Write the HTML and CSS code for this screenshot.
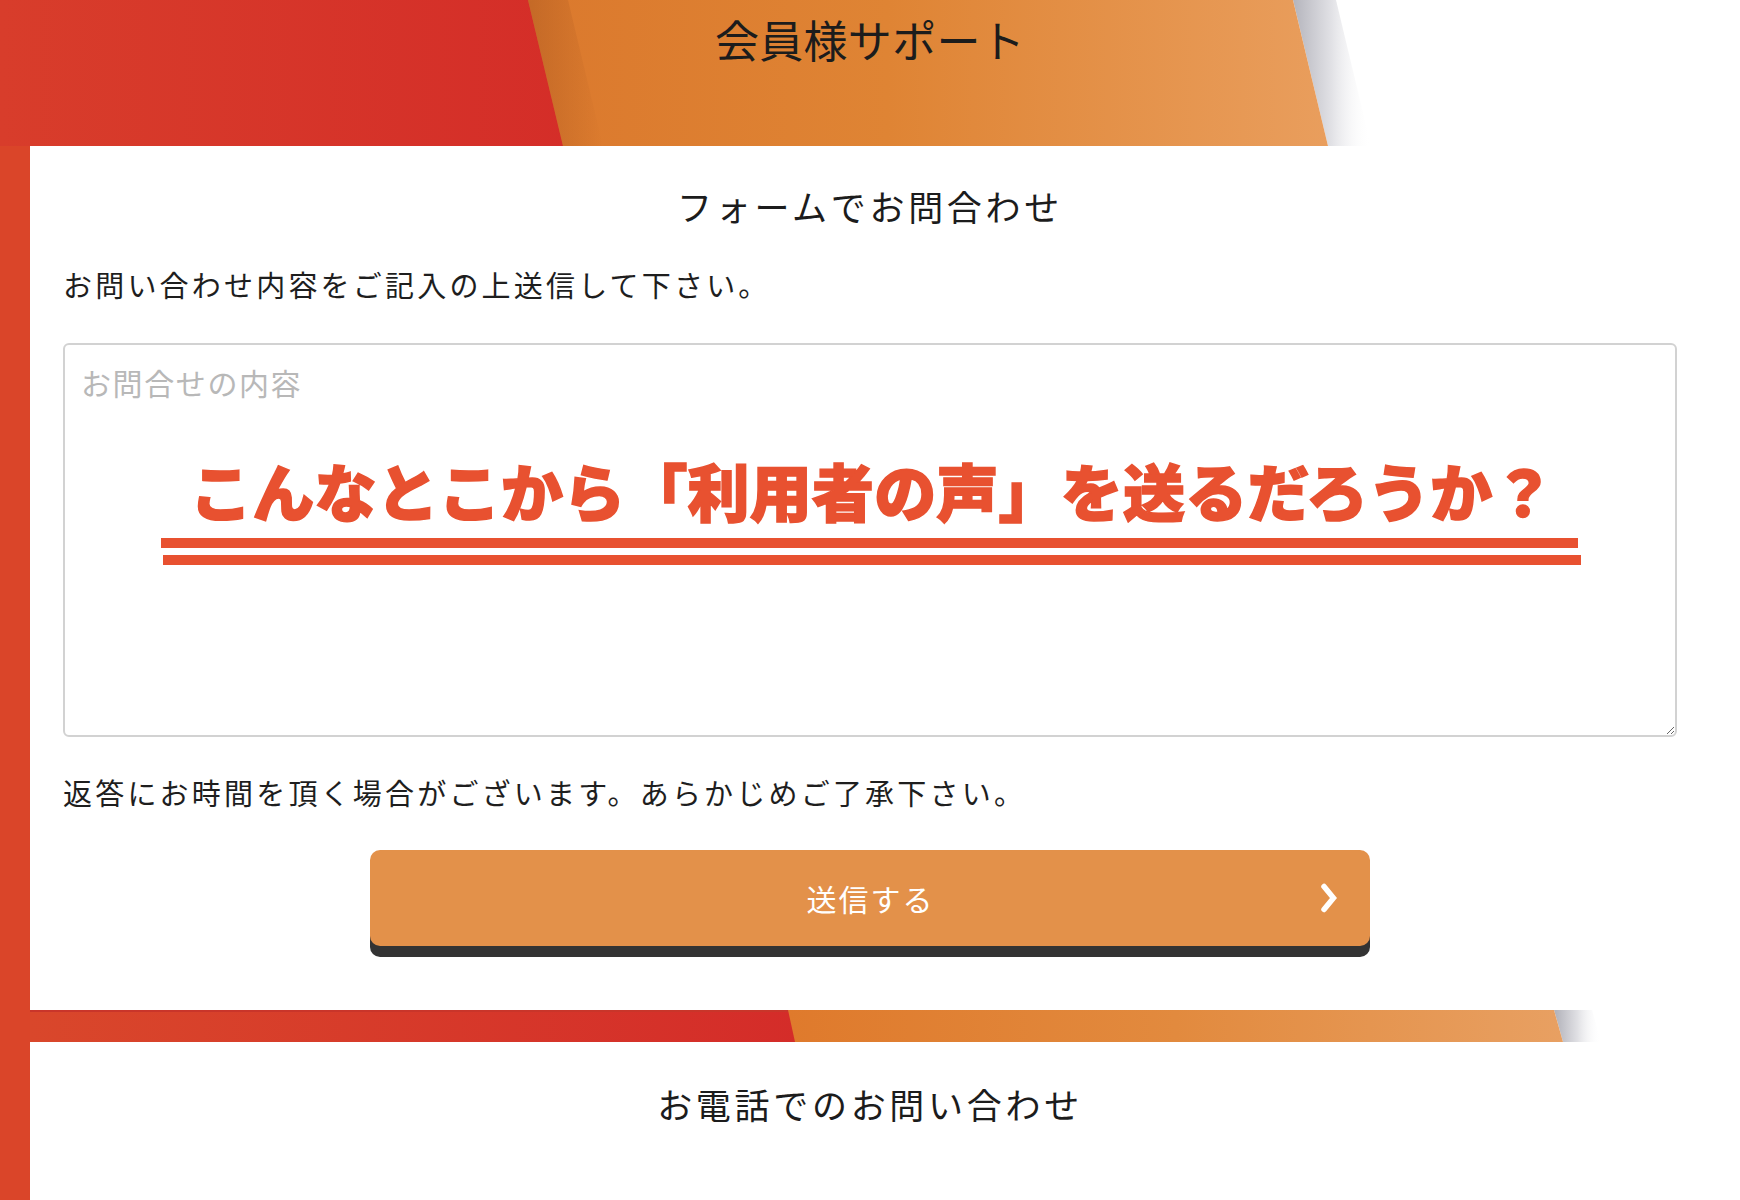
FILE: index.html
```html
<!DOCTYPE html>
<html lang="ja">
<head>
<meta charset="utf-8">
<title>会員様サポート</title>
<link rel="stylesheet" href="styles.css">
</head>
<body>
<div class="page">
  <header class="hero">
    <svg class="hero-art" viewBox="0 0 1740 146" preserveAspectRatio="none" aria-hidden="true">
      <defs>
        <linearGradient id="hr" x1="0" x2="1" y1="0" y2="0">
          <stop offset="0" stop-color="#d83d2b"/>
          <stop offset="1" stop-color="#d42c28"/>
        </linearGradient>
        <linearGradient id="ho" x1="0" x2="1" y1="0" y2="0">
          <stop offset="0" stop-color="#db792d"/>
          <stop offset="0.45" stop-color="#df8434"/>
          <stop offset="1" stop-color="#e99e5d"/>
        </linearGradient>
        <linearGradient id="hs" x1="0" x2="1" y1="0" y2="0">
          <stop offset="0" stop-color="#b4b4bc"/>
          <stop offset="0.5" stop-color="#e2e2e6"/>
          <stop offset="1" stop-color="#ffffff" stop-opacity="0"/>
        </linearGradient>
        <linearGradient id="hd" x1="0" x2="1" y1="0" y2="0">
          <stop offset="0" stop-color="#a8561f" stop-opacity="0.45"/>
          <stop offset="1" stop-color="#a8561f" stop-opacity="0"/>
        </linearGradient>
      </defs>
      <rect x="0" y="0" width="620" height="146" fill="url(#hr)"/>
      <polygon points="1293,0 1336,0 1371,146 1328,146" fill="url(#hs)"/>
      <polygon points="528,0 1293,0 1328,146 563,146" fill="url(#ho)"/>
      <polygon points="528,0 568,0 603,146 563,146" fill="url(#hd)"/>
    </svg>
    <h1 class="hero-title">会員様サポート</h1>
  </header>

  <main class="card">
    <section class="form-sec">
      <h2 class="sec-title">フォームでお問合わせ</h2>
      <p class="lead">お問い合わせ内容をご記入の上送信して下さい。</p>
      <div class="field">
        <textarea class="message" placeholder="お問合せの内容"></textarea>
        <div class="annot">
          <p class="annot-text">こんなとこから「利用者の声」を送るだろうか？</p>
          <span class="annot-line annot-line-1"></span>
          <span class="annot-line annot-line-2"></span>
        </div>
      </div>
      <p class="note">返答にお時間を頂く場合がございます。あらかじめご了承下さい。</p>
      <button class="submit" type="button">
        <span class="submit-label">送信する</span>
        <svg class="submit-icon" viewBox="0 0 16 30" width="16" height="30" aria-hidden="true">
          <polyline points="3,3.5 12.5,15 3,26.5" fill="none" stroke="#ffffff" stroke-width="5.5" stroke-linejoin="miter" stroke-linecap="round"/>
        </svg>
      </button>
    </section>

    <div class="band">
      <svg class="band-art" viewBox="0 0 1680 32" preserveAspectRatio="none" aria-hidden="true">
        <defs>
          <linearGradient id="br" x1="0" x2="1" y1="0" y2="0">
            <stop offset="0" stop-color="#d9472b"/>
            <stop offset="1" stop-color="#d42b29"/>
          </linearGradient>
          <linearGradient id="bo" x1="0" x2="1" y1="0" y2="0">
            <stop offset="0" stop-color="#df7a2c"/>
            <stop offset="0.5" stop-color="#e28a3e"/>
            <stop offset="1" stop-color="#e8a062"/>
          </linearGradient>
          <linearGradient id="bs" x1="0" x2="1" y1="0" y2="0">
            <stop offset="0" stop-color="#b0b0b8"/>
            <stop offset="0.5" stop-color="#e0e0e4"/>
            <stop offset="1" stop-color="#ffffff" stop-opacity="0"/>
          </linearGradient>
        </defs>
        <rect x="0" y="0" width="800" height="32" fill="url(#br)"/>
        <rect x="0" y="0" width="765" height="2" fill="#c9352a"/>
        <polygon points="1524,0 1562,0 1571,32 1533,32" fill="url(#bs)"/>
        <polygon points="758,0 1524,0 1533,32 765,32" fill="url(#bo)"/>
      </svg>
    </div>

    <section class="phone-sec">
      <h2 class="sec-title">お電話でのお問い合わせ</h2>
    </section>
  </main>
</div>
</body>
</html>
```

FILE: styles.css
```css
* {
  box-sizing: border-box;
}

html, body {
  margin: 0;
  padding: 0;
}

body {
  width: 1740px;
  min-height: 1200px;
  font-family: "Noto Sans CJK JP", "Noto Sans", sans-serif;
  color: #1e1e1e;
  background: linear-gradient(90deg, #da4529 0, #da4529 30px, #ffffff 30px, #ffffff 100%);
}

.page {
  width: 1740px;
  min-height: 1200px;
}

/* ---------- header ---------- */
.hero {
  display: grid;
  height: 146px;
}

.hero > * {
  grid-area: 1 / 1;
}

.hero-art {
  display: block;
  width: 1740px;
  height: 146px;
}

.hero-title {
  justify-self: center;
  align-self: start;
  margin: 0;
  padding: 9px 0 0 0;
  font-size: 44px;
  line-height: 60px;
  font-weight: 400;
  letter-spacing: 0.3px;
  color: #1c1c1c;
}

/* ---------- card ---------- */
.card {
  margin-left: 30px;
  width: 1680px;
  background: #ffffff;
  min-height: 1054px;
}

.form-sec {
  padding: 36px 33px 53px;
  display: flex;
  flex-direction: column;
}

.sec-title {
  margin: 0;
  text-align: center;
  font-size: 35px;
  line-height: 48px;
  font-weight: 400;
  letter-spacing: 3.7px;
  color: #1c1c1c;
}

.lead,
.note {
  margin: 0;
  font-size: 29px;
  line-height: 42px;
  letter-spacing: 3.2px;
  color: #1e1e1e;
}

.lead {
  margin-top: 33px;
}

.field {
  position: relative;
  margin-top: 38px;
  height: 394px;
}

.message {
  display: block;
  width: 100%;
  height: 394px;
  margin: 0;
  padding: 16px 16px;
  border: 2px solid #d2d2d2;
  border-radius: 6px;
  background: #ffffff;
  font-family: "Noto Sans CJK JP", "Noto Sans", sans-serif;
  font-size: 30px;
  line-height: 42px;
  letter-spacing: 1.6px;
  color: #222;
  resize: vertical;
}

.message::placeholder {
  color: #b8b8b8;
}

/* red annotation drawn over the textarea */
.annot {
  position: absolute;
  left: 0;
  top: 0;
  width: 100%;
  height: 100%;
  pointer-events: none;
}

.annot-text {
  position: absolute;
  left: 127px;
  top: 116px;
  margin: 0;
  white-space: nowrap;
  font-size: 62px;
  line-height: 62px;
  font-weight: 900;
  letter-spacing: 0.2px;
  color: #e85130;
  -webkit-text-stroke: 1.6px #e85130;
}

.annot-line {
  position: absolute;
  display: block;
  height: 10px;
  background: #e85130;
}

.annot-line-1 {
  left: 98px;
  top: 195px;
  width: 1417px;
}

.annot-line-2 {
  left: 100px;
  top: 212px;
  width: 1418px;
}

.note {
  margin-top: 34px;
}

.submit {
  margin: 37px auto 11px;
  width: 1000px;
  height: 96px;
  border: 0;
  border-radius: 10px;
  background: #e3914a;
  box-shadow: 0 11px 0 #333333;
  display: grid;
  grid-template-columns: 1fr auto 1fr;
  align-items: center;
  padding: 0 33px 0 0;
  font-family: "Noto Sans CJK JP", "Noto Sans", sans-serif;
  cursor: pointer;
}

.submit-label {
  grid-column: 2;
  font-size: 30px;
  line-height: 40px;
  letter-spacing: 2px;
  color: #ffffff;
  padding-left: 34px;
}

.submit-icon {
  grid-column: 3;
  justify-self: end;
  display: block;
}

/* ---------- separator band ---------- */
.band {
  height: 32px;
}

.band-art {
  display: block;
  width: 1680px;
  height: 32px;
}

.phone-sec {
  padding: 38px 33px 60px;
}
```
